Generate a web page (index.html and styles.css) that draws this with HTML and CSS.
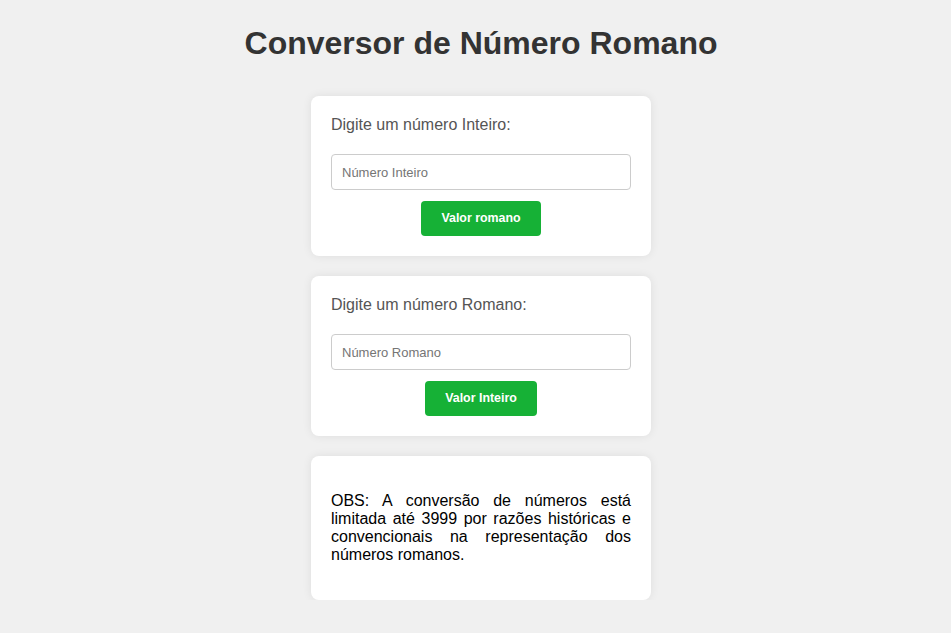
FILE: index.html
```html
<!DOCTYPE html>
<html lang="pt-BR">
<head>
<meta charset="utf-8">
<title>Conversor de Número Romano</title>
<link rel="stylesheet" href="styles.css">
</head>
<body>
<h1 class="title">Conversor de Número Romano</h1>
<main class="stack">
  <section class="card">
    <label class="label" for="inteiro">Digite um número Inteiro:</label>
    <input class="field" id="inteiro" type="text" placeholder="Número Inteiro">
    <button class="btn">Valor romano</button>
  </section>
  <section class="card">
    <label class="label" for="romano">Digite um número Romano:</label>
    <input class="field" id="romano" type="text" placeholder="Número Romano">
    <button class="btn">Valor Inteiro</button>
  </section>
  <section class="card">
    <p class="note">OBS: A conversão de números está limitada até 3999 por razões históricas e convencionais na representação dos números romanos.</p>
  </section>
</main>
</body>
</html>
```
FILE: styles.css
```css
html, body {
  margin: 0;
  padding: 0;
}
body {
  background: #f0f0f0;
  font-family: "Liberation Sans", Arial, sans-serif;
  padding: 25px 0 0 11px;
}
.title {
  margin: 0 0 34px;
  text-align: center;
  font-size: 32px;
  font-weight: bold;
  color: #333;
  line-height: 37px;
}
.stack {
  display: flex;
  flex-direction: column;
  align-items: center;
  gap: 20px;
}
.card {
  width: 300px;
  padding: 20px;
  background: #fff;
  border-radius: 8px;
  box-shadow: 0 0 10px rgba(0, 0, 0, 0.08);
  display: flex;
  flex-direction: column;
  align-items: center;
}
.label {
  align-self: stretch;
  font-size: 16px;
  line-height: 18px;
  color: #555;
  margin-bottom: 20px;
}
.field {
  box-sizing: border-box;
  width: 300px;
  height: 36px;
  padding: 0 10px;
  border: 1px solid #ccc;
  border-radius: 4px;
  font-family: "Liberation Sans", Arial, sans-serif;
  font-size: 13px;
  color: #333;
  margin: 0 0 11px;
}
.field::placeholder {
  color: #757575;
}
.btn {
  background: #16b136;
  color: #fff;
  border: none;
  border-radius: 4px;
  padding: 10px 20px;
  font-family: "Liberation Sans", Arial, sans-serif;
  font-size: 12.4px;
  font-weight: bold;
  line-height: 15px;
  cursor: pointer;
}
.note {
  margin: 16px 0;
  font-size: 16px;
  line-height: 18px;
  color: #000;
  text-align: justify;
}
```
